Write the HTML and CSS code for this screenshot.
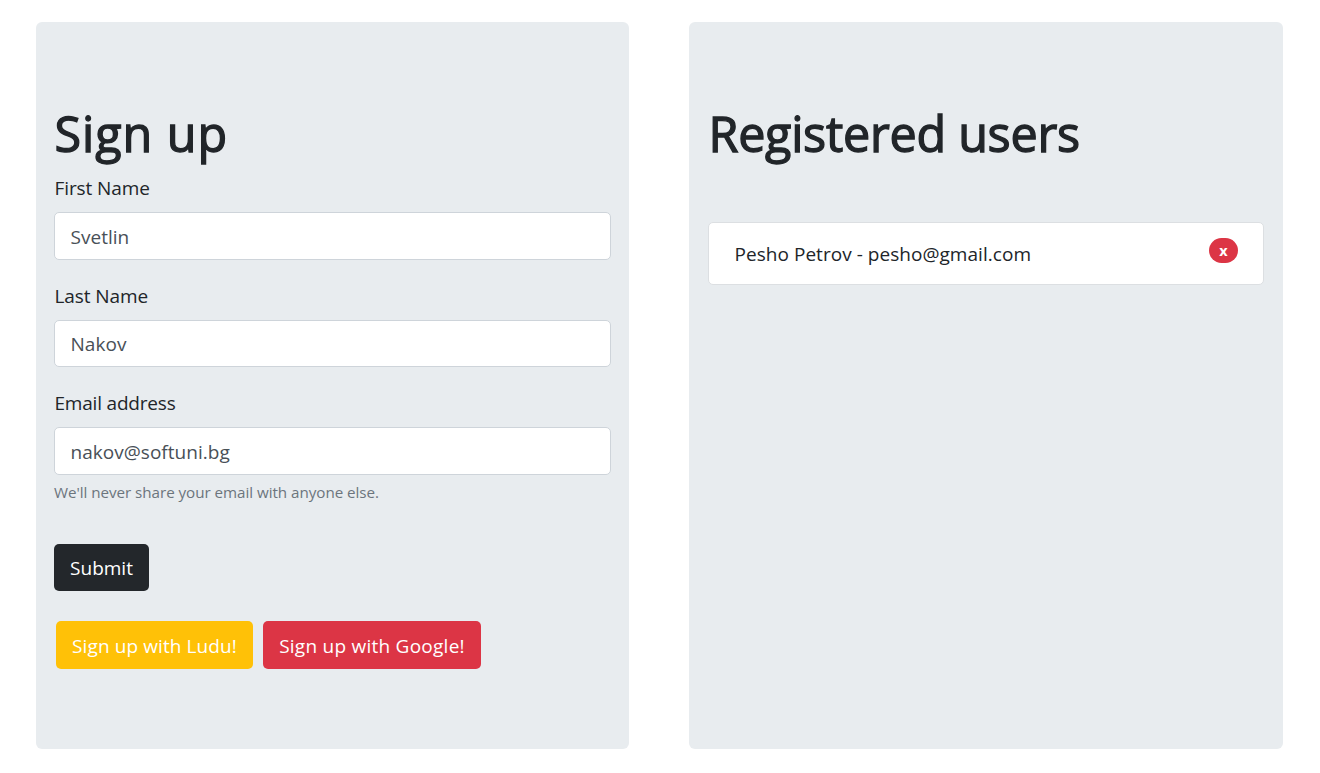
FILE: index.html
```html
<!DOCTYPE html>
<html lang="en">
<head>
<meta charset="utf-8">
<title>Sign up</title>
<link rel="stylesheet" href="styles.css">
</head>
<body>
<main class="row">
  <section class="panel">
    <h1 class="title-signup">Sign up</h1>
    <form>
      <div class="group">
        <label for="first">First Name</label>
        <input class="control" id="first" type="text" value="Svetlin">
      </div>
      <div class="group">
        <label for="last">Last Name</label>
        <input class="control short" id="last" type="text" value="Nakov">
      </div>
      <div class="group group-email">
        <label class="label-email" for="email">Email address</label>
        <input class="control" id="email" type="email" value="nakov@softuni.bg">
        <small>We'll never share your email with anyone else.</small>
      </div>
      <button type="button" class="btn dark">Submit</button>
      <div class="social">
        <button type="button" class="btn yellow">Sign up with Ludu!</button>
        <button type="button" class="btn red">Sign up with Google!</button>
      </div>
    </form>
  </section>
  <section class="panel">
    <h1 class="title-users">Registered users</h1>
    <ul class="users">
      <li><span class="user">Pesho Petrov - pesho@gmail.com</span><span class="badge">x</span></li>
    </ul>
  </section>
</main>
</body>
</html>
```
FILE: styles.css
```css
* { box-sizing: border-box; }
body { margin: 0; background: #fff; color: #212529; font: 19px/28px "Open Sans", "Noto Sans", sans-serif; }
.row { display: grid; grid-template-columns: 593px 594px; gap: 60px; padding: 22px 0 0 36px; }
.panel { height: 727px; padding: 82px 18px 0; background: #e8ecef; border-radius: 6px; }
.panel + .panel { padding-left: 19px; padding-right: 19px; }
h1 { margin: 0; font-size: 48.5px; line-height: 58px; height: 58px; font-weight: 400; white-space: nowrap; -webkit-text-stroke: 1.3px #212529; }
.title-signup { padding-left: 0.5px; letter-spacing: 0.95px; }
.title-users { padding-left: 0.5px; letter-spacing: -0.28px; }
form { padding-top: 12px; }
.group { height: 107.6px; }
.group-email { height: 155px; }
label { display: block; height: 38px; padding-left: 0.5px; letter-spacing: -0.1px; }
.label-email { letter-spacing: -0.2px; }
.control { display: block; width: 100%; height: 48px; padding: 2px 15.5px 0; border: 1px solid #ced4da; border-radius: 5px; background: #fff; color: #495057; font: inherit; letter-spacing: 0.03px; outline: 0; }
.short { height: 47px; padding-top: 1px; }
small { display: block; margin-top: 5px; font-size: 15.2px; line-height: 24px; letter-spacing: -0.04px; color: #6c757d; }
.btn { height: 47px; padding: 0; border: 0; border-radius: 5px; color: #fff; font: inherit; white-space: nowrap; }
.dark { display: block; width: 95px; background: #23272b; }
.social { display: flex; gap: 10px; margin: 30px 0 0 2px; }
.social .btn { height: 48px; padding-top: 1px; }
.yellow { width: 197px; background: #ffc107; letter-spacing: 0.1px; }
.red { width: 218px; background: #dc3545; letter-spacing: 0.25px; }
.users { margin: 60px 0 0; padding: 0; list-style: none; }
.users li { display: flex; justify-content: space-between; height: 63px; padding: 15px 25px; border: 1px solid #dcdfe2; border-radius: 5px; background: #fff; line-height: 32px; }
.user { padding-left: 0.5px; letter-spacing: 0.04px; }
.badge { width: 29px; height: 25px; border-radius: 13px; background: #dc3545; color: #fff; font-size: 14.5px; font-weight: 700; line-height: 25px; text-align: center; }
```
